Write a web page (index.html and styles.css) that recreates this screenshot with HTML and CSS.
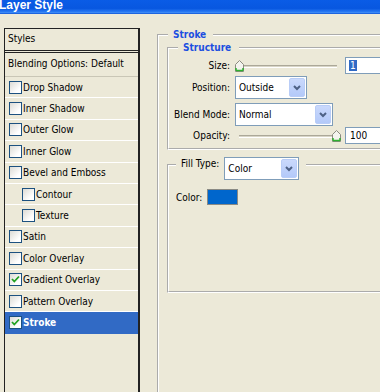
FILE: index.html
```html
<!DOCTYPE html>
<html lang="en">
<head>
<meta charset="UTF-8">
<title>Layer Style</title>
<link rel="stylesheet" href="styles.css">
</head>
<body>
<div class="titlebar"><span class="title">Layer Style</span></div>

<div class="dialog">
    <div class="styles-list">
        <div class="list-head">Styles</div>
        <div class="list-blend">Blending Options: Default</div>
        <div class="list-item"><span class="check"></span>Drop Shadow</div>
        <div class="list-item"><span class="check"></span>Inner Shadow</div>
        <div class="list-item"><span class="check"></span>Outer Glow</div>
        <div class="list-item"><span class="check"></span>Inner Glow</div>
        <div class="list-item"><span class="check"></span>Bevel and Emboss</div>
        <div class="list-item sub"><span class="check"></span>Contour</div>
        <div class="list-item sub"><span class="check"></span>Texture</div>
        <div class="list-item"><span class="check"></span>Satin</div>
        <div class="list-item"><span class="check"></span>Color Overlay</div>
        <div class="list-item"><span class="check"><svg width="11" height="11" viewBox="0 0 11 11"><path d="M2 5 L4.3 7.5 L9 2.5" fill="none" stroke="#21a121" stroke-width="1.8"/></svg></span>Gradient Overlay</div>
        <div class="list-item"><span class="check"></span>Pattern Overlay</div>
        <div class="list-item selected"><span class="check"><svg width="11" height="11" viewBox="0 0 11 11"><path d="M2 5 L4.3 7.5 L9 2.5" fill="none" stroke="#21a121" stroke-width="1.8"/></svg></span>Stroke</div>
    </div>

    <div class="panel">
        <fieldset class="group outer">
            <legend class="caption">Stroke</legend>

            <fieldset class="group structure">
                <legend class="caption">Structure</legend>

                <div class="field-row short">
                    <span class="field-label">Size:</span>
                    <div class="slider">
                        <span class="track"></span>
                        <span class="thumb" style="left: 0px;"><svg width="9" height="12" viewBox="0 0 9 12"><path d="M0.5 11.5 V4.5 L4.5 0.5 L8.5 4.5 V11.5 Z" fill="#f4f4ee" stroke="#8c8b80"/><path d="M1 10.5 H8 M1 8 V10.5 M8 8 V10.5" stroke="#2fb12f" stroke-width="1.5"/></svg></span>
                    </div>
                    <div class="textbox"><span class="sel">1</span></div>
                </div>

                <div class="field-row tall pos-row">
                    <span class="field-label">Position:</span>
                    <div class="combo position-combo">
                        <span class="combo-text">Outside</span>
                        <span class="combo-btn"><svg width="8" height="6" viewBox="0 0 8 6"><path d="M1 1 L4 4 L7 1" fill="none" stroke="#4d6185" stroke-width="2"/></svg></span>
                    </div>
                </div>

                <div class="field-row tall blend-row">
                    <span class="field-label">Blend Mode:</span>
                    <div class="combo blend-combo">
                        <span class="combo-text">Normal</span>
                        <span class="combo-btn"><svg width="8" height="6" viewBox="0 0 8 6"><path d="M1 1 L4 4 L7 1" fill="none" stroke="#4d6185" stroke-width="2"/></svg></span>
                    </div>
                </div>

                <div class="field-row short opacity-row">
                    <span class="field-label">Opacity:</span>
                    <div class="slider">
                        <span class="track"></span>
                        <span class="thumb" style="left: 97px;"><svg width="9" height="12" viewBox="0 0 9 12"><path d="M0.5 11.5 V4.5 L4.5 0.5 L8.5 4.5 V11.5 Z" fill="#f4f4ee" stroke="#8c8b80"/><path d="M1 10.5 H8 M1 8 V10.5 M8 8 V10.5" stroke="#2fb12f" stroke-width="1.5"/></svg></span>
                    </div>
                    <div class="textbox">100</div>
                </div>
            </fieldset>

            <fieldset class="group fill">
                <legend class="fill-legend">
                    <span class="fill-label">Fill Type:</span>
                    <div class="combo fill-combo">
                        <span class="combo-text">Color</span>
                        <span class="combo-btn"><svg width="8" height="6" viewBox="0 0 8 6"><path d="M1 1 L4 4 L7 1" fill="none" stroke="#4d6185" stroke-width="2"/></svg></span>
                    </div>
                </legend>

                <div class="color-row">
                    <span class="color-label">Color:</span>
                    <span class="swatch"></span>
                </div>
            </fieldset>
        </fieldset>
    </div>
</div>
</body>
</html>
```

FILE: styles.css
```css
* {
    box-sizing: border-box;
}

body {
    margin: 0;
    height: 392px;
    overflow: hidden;
    background-color: #ece9d8;
    font-family: "DejaVu Sans", sans-serif;
    font-stretch: condensed;
    font-size: 10px;
    color: #000;
}

.titlebar {
    height: 14px;
    overflow: hidden;
    background: linear-gradient(to bottom, #0a5ce6 0%, #0857e0 60%, #2576f2 82%, #3c8af6 90%, #0b4fd2 100%);
}

.title {
    display: block;
    margin: -2px 0 0 -1px;
    font: bold 12px/14px "Liberation Sans", Arial, sans-serif;
    color: #fff;
}

.dialog {
    display: flex;
    width: 640px;
    padding-top: 14px;
}

/* left styles list */
.styles-list {
    flex: none;
    width: 136px;
    height: 420px;
    margin-left: 4px;
    border-top: 1px solid #222;
    border-left: 1px solid #222;
    border-right: 2px solid #222;
}

.list-head {
    height: 22px;
    display: flex;
    align-items: center;
    padding: 0 0 3px 3px;
    border-bottom: 1px solid #222;
}

.list-blend {
    height: 25px;
    margin-top: 1px;
    display: flex;
    align-items: center;
    padding: 0 0 2px 3px;
    border-top: 1px solid #222;
    border-bottom: 1px solid #c9c6b6;
}

.list-item {
    height: 21.4px;
    display: flex;
    align-items: center;
    padding-left: 4px;
    border-bottom: 1px solid #fff;
}

.list-item.sub {
    padding-left: 17px;
}

.list-item.selected {
    background-color: #316ac5;
    color: #fff;
    font-weight: bold;
    border-bottom-color: #316ac5;
}

.check {
    flex: none;
    width: 13px;
    height: 13px;
    margin-right: 1px;
    border: 1px solid #1c5180;
    background: linear-gradient(135deg, #dcdbd5, #fff 75%);
    display: flex;
    align-items: center;
    justify-content: center;
}

/* right panel */
.panel {
    margin-left: 17px;
    width: 460px;
}

.group {
    margin: 0;
    min-width: 0;
    border: 2px groove #fff;
}

.group.outer {
    height: 420px;
    padding: 0 0 0 8px;
}

.caption {
    margin-left: 1px;
    padding: 0 7px 0 5px;
    font-weight: bold;
    line-height: 13px;
    color: #1c4fe0;
}

.group.structure {
    padding: 3px 0 4px 9px;
}

.structure .caption {
    margin-left: 0;
    padding: 0 8px 0 5px;
}

.field-row {
    display: flex;
    align-items: center;
}

.field-row.short {
    height: 17px;
}

.field-row.tall {
    height: 23px;
}

.pos-row {
    margin-top: 2px;
}

.blend-row {
    margin-top: 4px;
}

.opacity-row {
    margin-top: 1px;
}

.field-label {
    flex: none;
    width: 52px;
    margin-right: 5px;
    display: flex;
    justify-content: flex-end;
    white-space: nowrap;
}

.slider {
    position: relative;
    flex: none;
    width: 106px;
    height: 12px;
}

.track {
    display: block;
    height: 3px;
    margin: 5px 4px 0;
    border-top: 1px solid #aca899;
    border-bottom: 1px solid #fff;
    background-color: #d8d5c6;
}

.thumb {
    position: absolute;
    top: 0;
    display: block;
    width: 9px;
    height: 12px;
}

.thumb svg {
    display: block;
}

.textbox {
    flex: none;
    width: 60px;
    height: 17px;
    margin-left: 4px;
    padding-left: 4px;
    display: flex;
    align-items: center;
    border: 1px solid #7f9db9;
    background-color: #fff;
}

.sel {
    margin-left: -1px;
    padding: 0 1px;
    background-color: #316ac5;
    color: #fff;
}

.combo {
    flex: none;
    height: 23px;
    display: flex;
    align-items: center;
    padding-left: 3px;
    border: 1px solid #7f9db9;
    background-color: #fff;
    font-weight: normal;
    color: #000;
}

.combo-text {
    flex: 1;
}

.combo-btn {
    width: 16px;
    height: 19px;
    margin: 1px;
    display: flex;
    align-items: center;
    justify-content: center;
    border: 1px solid #b9cdf7;
    border-radius: 2px;
    background: linear-gradient(to bottom, #cad9fc, #b3c9f9);
}

.position-combo {
    width: 72px;
}

.blend-combo {
    width: 98px;
}

.fill-combo {
    width: 75px;
}

/* fill type group */
.group.fill {
    margin-top: 7px;
    padding: 16px 0 86px 7px;
}

.fill-legend {
    height: 16px;
    display: flex;
    align-items: flex-start;
    gap: 5px;
    padding: 0 7px 0 5px;
}

.fill-label {
    line-height: 14px;
}

.color-row {
    height: 16px;
    display: flex;
    align-items: center;
}

.color-label {
    margin-right: 5px;
}

.swatch {
    width: 31px;
    height: 16px;
    border: 1px solid #8a8a84;
    background-color: #0066cc;
}
```
